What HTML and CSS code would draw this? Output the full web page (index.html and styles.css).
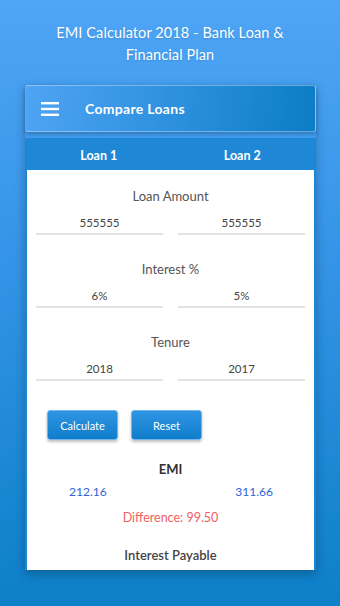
FILE: index.html
```html
<!DOCTYPE html>
<html lang="en">
<head>
  <meta charset="UTF-8">
  <title>EMI Calculator - Compare Loans</title>
  <meta name="viewport" content="width=device-width, initial-scale=1.0">
  <link rel="stylesheet" href="styles.css">
</head>
<body>
  <div class="screen">
    <h1 class="headline">EMI Calculator 2018 - Bank Loan &amp;<br>Financial Plan</h1>

    <div class="phone">
      <div class="toolbar">
        <svg class="menu-icon" width="18" height="14" viewBox="0 0 18 14">
          <rect x="0" y="0" width="18" height="2.4" fill="#fff"/>
          <rect x="0" y="5.8" width="18" height="2.4" fill="#fff"/>
          <rect x="0" y="11.6" width="18" height="2.4" fill="#fff"/>
        </svg>
        <span class="toolbar-title">Compare Loans</span>
      </div>

      <div class="content">
        <div class="tabs">
          <div class="tab">Loan 1</div>
          <div class="tab">Loan 2</div>
        </div>

        <div class="field">
          <div class="field-label">Loan Amount</div>
          <div class="field-row">
            <div class="input">555555</div>
            <div class="input">555555</div>
          </div>
        </div>

        <div class="field">
          <div class="field-label">Interest %</div>
          <div class="field-row">
            <div class="input">6%</div>
            <div class="input">5%</div>
          </div>
        </div>

        <div class="field">
          <div class="field-label">Tenure</div>
          <div class="field-row">
            <div class="input">2018</div>
            <div class="input">2017</div>
          </div>
        </div>

        <div class="buttons">
          <button class="btn">Calculate</button>
          <button class="btn">Reset</button>
        </div>

        <div class="result">
          <div class="result-title">EMI</div>
          <div class="result-row">
            <span class="result-value">212.16</span>
            <span class="result-value">311.66</span>
          </div>
          <div class="difference">Difference: 99.50</div>
        </div>

        <div class="result-title next">Interest Payable</div>
      </div>
    </div>
  </div>
</body>
</html>
```

FILE: styles.css
```css
* {
  margin: 0;
  padding: 0;
  box-sizing: border-box;
}

html, body {
  width: 340px;
  height: 606px;
  overflow: hidden;
}

body {
  font-family: 'Lato', 'Open Sans', sans-serif;
  background: linear-gradient(180deg, #4fa5f6 0%, #3393e6 45%, #0c80c8 100%);
  color: #333;
}

.screen {
  height: 606px;
  padding-top: 22px;
}

.headline {
  color: #fff;
  font-size: 14.5px;
  font-weight: normal;
  text-align: center;
  line-height: 22px;
  letter-spacing: 0.1px;
  text-shadow: 0 1px 2px rgba(0, 0, 0, 0.15);
}

.phone {
  width: 291px;
  margin: 19px 0 0 25px;
  box-shadow: 0 4px 10px rgba(0, 0, 0, 0.25);
}

.toolbar {
  height: 47px;
  display: flex;
  align-items: center;
  padding-left: 15px;
  background: linear-gradient(100deg, #4fa4f3 0%, #2a8fdd 55%, #0b7dc5 100%);
  border: 1px solid rgba(255, 255, 255, 0.35);
  border-radius: 3px;
  box-shadow: 0 2px 4px rgba(0, 0, 0, 0.25);
}

.menu-icon {
  margin-right: 26px;
}

.toolbar-title {
  color: #fff;
  font-size: 14px;
  font-weight: bold;
  letter-spacing: 0.3px;
}

.content {
  margin-top: 6px;
  background: #fff;
  border-left: 2px solid #1b86d4;
  border-right: 2px solid #1b86d4;
  height: 432px;
  overflow: hidden;
}

.tabs {
  display: flex;
  height: 32px;
  background: #1e88d6;
}

.tab {
  flex: 1;
  color: #fff;
  font-size: 12.5px;
  font-weight: bold;
  display: flex;
  align-items: center;
  justify-content: center;
  padding-top: 2px;
}

.field {
  padding: 0 9px;
  margin-top: 17px;
}

.field + .field {
  margin-top: 25px;
}

.field-label {
  text-align: center;
  font-size: 13px;
  color: #555;
  line-height: 18px;
}

.field-row {
  display: flex;
  gap: 15px;
  margin-top: 11px;
}

.input {
  flex: 1;
  text-align: center;
  font-size: 11.5px;
  color: #444;
  padding-bottom: 3px;
  border-bottom: 2px solid #e3e3e3;
  line-height: 14px;
}

.buttons {
  display: flex;
  gap: 13px;
  padding-left: 20px;
  margin-top: 29px;
}

.btn {
  height: 30px;
  width: 71px;
  border: 1px solid #6fb4ee;
  border-radius: 3px;
  background: linear-gradient(180deg, #2f95e4 0%, #0f7dcb 100%);
  color: #fff;
  font-family: inherit;
  font-size: 11px;
  box-shadow: 0 2px 3px rgba(0, 0, 0, 0.25);
}

.result {
  margin-top: 20px;
  text-align: center;
}

.result-title {
  font-size: 13px;
  font-weight: bold;
  color: #333;
  text-align: center;
  line-height: 18px;
}

.result-row {
  display: flex;
  justify-content: space-between;
  padding: 0 41px 0 42px;
  margin-top: 6px;
}

.result-value {
  color: #2c64d8;
  font-size: 12px;
}

.difference {
  color: #f25f5f;
  font-size: 12.5px;
  margin-top: 11px;
}

.result-title.next {
  margin-top: 21px;
  font-weight: 600;
  color: #444;
}
```
